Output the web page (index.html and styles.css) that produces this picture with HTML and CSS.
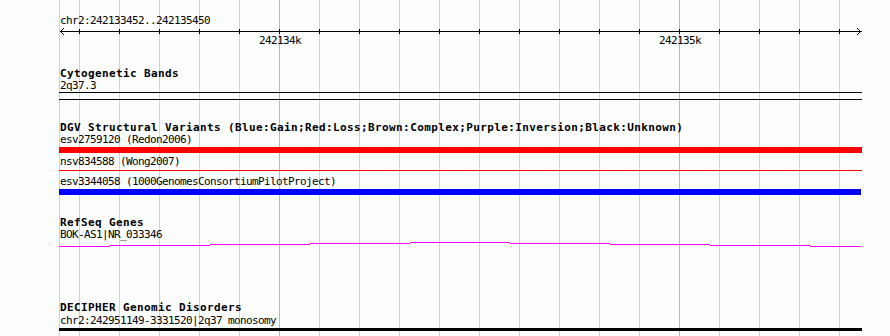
FILE: index.html
```html
<!DOCTYPE html>
<html>
<head>
<meta charset="utf-8">
<link rel="stylesheet" href="styles.css">
</head>
<body>
<div class="tracks">
  <div class="grid">
    <i class="gl"></i><i class="gl"></i><i class="gl"></i><i class="gl"></i><i class="gl"></i><i class="gl"></i>
    <i class="gl major"></i><i class="gl"></i><i class="gl"></i><i class="gl"></i><i class="gl"></i><i class="gl"></i>
    <i class="gl"></i><i class="gl"></i><i class="gl"></i><i class="gl"></i><i class="gl major"></i><i class="gl"></i>
    <i class="gl"></i><i class="gl"></i><i class="gl"></i><i class="gl"></i>
  </div>
  <div class="content">
    <div class="row loc">chr2:242133452..242135450</div>
    <svg class="ruler" width="803" height="20" viewBox="0 0 803 20">
      <rect x="1" y="4" width="802" height="1" fill="#000"/>
      <path d="M5 1 L1.5 4.5 L5 8" fill="none" stroke="#000" stroke-width="1"/>
      <path d="M798 1 L801.5 4.5 L798 8" fill="none" stroke="#000" stroke-width="1"/>
      <g fill="#000">
        <rect x="20" y="2" width="1" height="5"/><rect x="60" y="2" width="1" height="5"/>
        <rect x="100" y="2" width="1" height="5"/><rect x="140" y="2" width="1" height="5"/>
        <rect x="180" y="2" width="1" height="5"/><rect x="220" y="2" width="1" height="5"/>
        <rect x="260" y="2" width="1" height="5"/><rect x="300" y="2" width="1" height="5"/>
        <rect x="340" y="2" width="1" height="5"/><rect x="380" y="2" width="1" height="5"/>
        <rect x="420" y="2" width="1" height="5"/><rect x="460" y="2" width="1" height="5"/>
        <rect x="500" y="2" width="1" height="5"/><rect x="540" y="2" width="1" height="5"/>
        <rect x="580" y="2" width="1" height="5"/><rect x="620" y="2" width="1" height="5"/>
        <rect x="660" y="2" width="1" height="5"/><rect x="700" y="2" width="1" height="5"/>
        <rect x="740" y="2" width="1" height="5"/><rect x="780" y="2" width="1" height="5"/>
      </g>
      <text class="tick" x="221" y="17" text-anchor="middle">242134k</text>
      <text class="tick" x="621" y="17" text-anchor="middle">242135k</text>
    </svg>

    <div class="row title t-cyto">Cytogenetic Bands</div>
    <div class="row">2q37.3</div>
    <div class="band"></div>

    <div class="row title t-dgv">DGV Structural Variants (Blue:Gain;Red:Loss;Brown:Complex;Purple:Inversion;Black:Unknown)</div>
    <div class="row">esv2759120 (Redon2006)</div>
    <div class="bar red thick"></div>
    <div class="row r-nsv">nsv834588 (Wong2007)</div>
    <div class="bar red thin"></div>
    <div class="row r-esv">esv3344058 (1000GenomesConsortiumPilotProject)</div>
    <div class="bar blue thick"></div>

    <div class="row title t-refseq">RefSeq Genes</div>
    <div class="row">BOK-AS1|NR_033346</div>
    <svg class="gene" width="803" height="6" viewBox="0 0 803 6">
      <g fill="#ff00ff">
        <rect x="0" y="5" width="51" height="1"/>
        <rect x="51" y="4" width="100" height="1"/>
        <rect x="151" y="3" width="100" height="1"/>
        <rect x="251" y="2" width="100" height="1"/>
        <rect x="351" y="1" width="100" height="1"/>
        <rect x="451" y="2" width="100" height="1"/>
        <rect x="551" y="3" width="100" height="1"/>
        <rect x="651" y="4" width="100" height="1"/>
        <rect x="751" y="5" width="51" height="1"/>
      </g>
    </svg>

    <div class="row title t-decipher">DECIPHER Genomic Disorders</div>
    <div class="row r-dec">chr2:242951149-3331520|2q37 monosomy</div>
    <div class="bar black"></div>
  </div>
</div>
</body>
</html>
```

FILE: styles.css
```css
html, body {
  margin: 0;
  padding: 0;
  background: #fbfefd;
}

.tracks {
  position: relative;
  margin-left: 59px;
  width: 803px;
  height: 336px;
  overflow: hidden;
}

.grid {
  position: absolute;
  top: 0;
  left: 0;
  bottom: 0;
  display: flex;
  z-index: 0;
}

.gl {
  display: block;
  width: 1px;
  flex: none;
  margin-left: 39px;
  background: #a2e5ee;
}

.gl:first-child { margin-left: 0; }
.gl:nth-child(2) { margin-left: 19px; }
.gl.major { background: #80cbe8; }

.content {
  position: relative;
  z-index: 1;
  display: flex;
  flex-direction: column;
}

.row {
  font-family: "DejaVu Sans Mono", "Liberation Mono", monospace;
  font-size: 11px;
  letter-spacing: -0.62px;
  line-height: 12px;
  height: 12px;
  padding-left: 1px;
  white-space: nowrap;
  color: #000;
  flex: none;
}

.title {
  font-weight: bold;
  letter-spacing: 0.38px;
}

.loc { margin-top: 15px; }

.ruler {
  display: block;
  flex: none;
}

.tick {
  font-family: "DejaVu Sans Mono", "Liberation Mono", monospace;
  font-size: 11px;
  letter-spacing: -0.62px;
  fill: #000;
}

.t-cyto { margin-top: 21px; }

.band {
  flex: none;
  height: 6px;
  border-top: 1px solid #000;
  border-bottom: 1px solid #000;
}

.t-dgv { margin-top: 22px; }

.bar { flex: none; }
.bar.thick { height: 6px; margin-top: 1px; }
.bar.red { background: #ff0000; }
.bar.blue { background: #0000ff; width: 802px; }
.bar.red.thin { height: 1px; margin-top: 2px; }

.r-nsv { margin-top: 3px; }
.r-esv { margin-top: 5px; }

.t-refseq { margin-top: 22px; }

.gene { display: block; flex: none; }

.t-decipher { margin-top: 55px; }
.r-dec { margin-top: 1px; }

.bar.black {
  background: #000;
  height: 3px;
  margin-top: 1px;
}
```
